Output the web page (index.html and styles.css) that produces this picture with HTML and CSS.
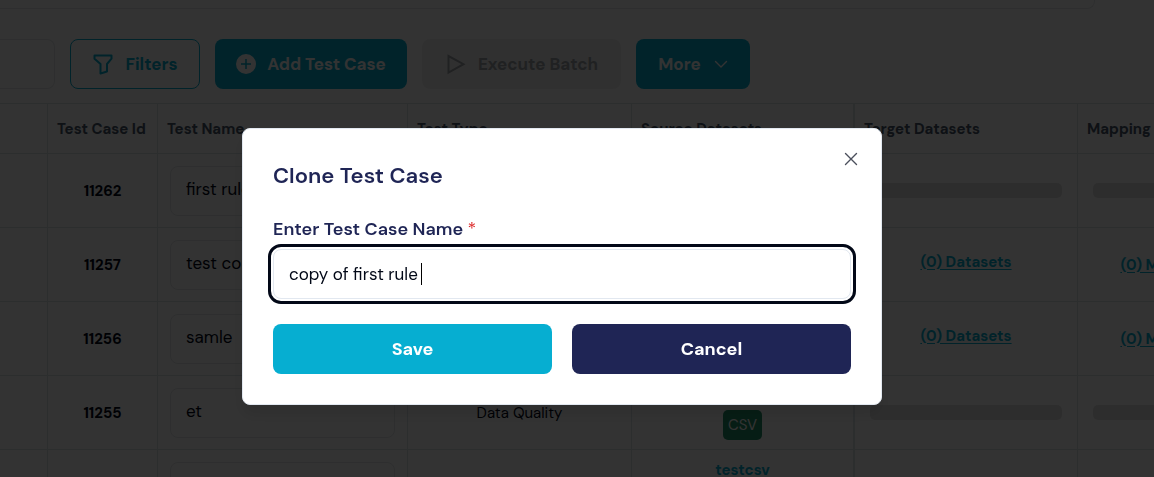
FILE: index.html
```
<!DOCTYPE html>
<html lang="en">
<head>
<meta charset="utf-8">
<meta name="viewport" content="width=device-width, initial-scale=1">
<title>Test Cases</title>
<link rel="stylesheet" href="styles.css">
</head>
<body>
<main class="page">
  <div class="panel"></div>
  <div class="toolbar">
    <input class="search" type="search" aria-label="Search test cases">
    <button class="btn btn-outline" type="button">
      <svg class="icon" viewBox="0 0 22 22" fill="none" stroke="currentColor" stroke-width="2" stroke-linejoin="round"><path d="M2.500 2.500h17v3.200l-4.500 5.300v7.500L8.500 20.500V11L2.500 5.700z"/></svg>
      Filters
    </button>
    <button class="btn btn-primary btn-add" type="button">
      <svg class="icon-plus" viewBox="0 0 20 20"><circle cx="10" cy="10" r="10" fill="#fff"/><path d="M10 5v10M5 10h10" stroke="#06aed1" stroke-width="1.500"/></svg>
      Add Test Case
    </button>
    <button class="btn btn-disabled" type="button" disabled>
      <svg class="icon" viewBox="0 0 22 22" fill="none" stroke="currentColor" stroke-width="2"><path d="M3.500 3v16.500L18.500 11.200z"/></svg>
      Execute Batch
    </button>
    <button class="btn btn-primary btn-more" type="button">
      More
      <svg class="icon-chevron" viewBox="0 0 14 14" fill="none" stroke="currentColor" stroke-width="1.400" stroke-linecap="round" stroke-linejoin="round"><path d="M1.500 4.500 7 10l5.500-5.500"/></svg>
    </button>
  </div>

  <table class="grid">
    <colgroup>
      <col class="col-select"><col class="col-id"><col class="col-name"><col class="col-data"><col class="col-source"><col class="col-target"><col class="col-mapping">
    </colgroup>
    <thead>
      <tr><th></th><th>Test Case Id</th><th>Test Name</th><th>Test Type</th><th>Source Datasets</th><th>Target Datasets</th><th>Mapping</th></tr>
    </thead>
    <tbody>
      <tr>
        <td></td><td class="id">11262</td>
        <td><input class="name" aria-label="Test name 11262" value="first rule"></td>
        <td></td><td></td>
        <td><div class="skeleton"></div></td><td><div class="skeleton"></div></td>
      </tr>
      <tr>
        <td></td><td class="id">11257</td>
        <td><input class="name" aria-label="Test name 11257" value="test copy"></td>
        <td></td><td></td>
        <td class="target"><a href="#">(0) Datasets</a></td><td><a href="#">(0) Mappings</a></td>
      </tr>
      <tr>
        <td></td><td class="id">11256</td>
        <td><input class="name" aria-label="Test name 11256" value="samle"></td>
        <td></td><td></td>
        <td class="target"><a href="#">(0) Datasets</a></td><td><a href="#">(0) Mappings</a></td>
      </tr>
      <tr>
        <td></td><td class="id">11255</td>
        <td><input class="name" aria-label="Test name 11255" value="et"></td>
        <td>Data Quality</td>
        <td><div class="source"><a href="#">testcsv</a><span class="badge">CSV</span></div></td>
        <td><div class="skeleton"></div></td><td><div class="skeleton"></div></td>
      </tr>
      <tr>
        <td></td><td></td>
        <td><input class="name" aria-label="Test name"></td>
        <td></td>
        <td><div class="source"><a href="#">testcsv</a><span class="badge">CSV</span></div></td>
        <td></td><td></td>
      </tr>
    </tbody>
  </table>
</main>

<div class="overlay">
  <form class="modal" role="dialog" aria-modal="true" aria-labelledby="dialog-title">
    <button class="close" type="button" aria-label="Close">
      <svg viewBox="0 0 14 14" fill="none" stroke="currentColor" stroke-width="1.400" stroke-linecap="round"><path d="M1.500 1.500l11 11M12.500 1.500l-11 11"/></svg>
    </button>
    <h2 id="dialog-title">Clone Test Case</h2>
    <label for="case-name">Enter Test Case Name <span class="required">*</span></label>
    <div class="field">
      <input id="case-name" type="text" value="copy of first rule" required>
      <span class="caret"></span>
    </div>
    <div class="actions">
      <button class="btn btn-save" type="submit">Save</button>
      <button class="btn btn-cancel" type="button">Cancel</button>
    </div>
  </form>
</div>
</body>
</html>
```
FILE: styles.css
```
* {
  box-sizing: border-box;
}

body {
  margin: 0;
  height: 100vh;
  overflow: hidden;
  background: #fff;
  color: #020817;
  font-family: "DM Sans", Inter, sans-serif;
  font-size: 15px;
}

button,
input {
  font: inherit;
  color: inherit;
}

.page {
  height: 100vh;
  overflow: hidden;
}

.panel {
  height: 9px;
  margin-right: 59px;
  border: solid #e5e7eb;
  border-width: 0 1px 1px 0;
  border-radius: 0 0 8px 0;
}

.toolbar {
  display: flex;
  gap: 15px;
  padding: 30px 0 14px;
}

.search {
  width: 55px;
  height: 50px;
  border: 1px solid #e5e7eb;
  border-left: 0;
  border-radius: 0 8px 8px 0;
  background: #fff;
}

.btn {
  display: flex;
  align-items: center;
  justify-content: center;
  height: 50px;
  padding: 0 20px;
  border: 0;
  border-radius: 8px;
  font-size: 17px;
  font-weight: 700;
  white-space: nowrap;
}

.btn-outline {
  gap: 11px;
  width: 130px;
  border: 1px solid #06aed1;
  background: #fff;
  color: #06aed1;
}

.btn-primary {
  background: #06aed1;
  color: #fff;
}

.btn-add {
  gap: 11px;
  width: 192px;
}

.btn-disabled {
  gap: 11px;
  width: 199px;
  background: #f1f1f1;
  color: #a0a4a8;
}

.btn-more {
  gap: 13px;
  width: 114px;
}

.icon {
  width: 22px;
  height: 22px;
  flex: none;
}

.icon-plus {
  width: 20px;
  height: 20px;
  flex: none;
}

.icon-chevron {
  width: 14px;
  height: 14px;
  flex: none;
}

.grid {
  width: 1260px;
  table-layout: fixed;
  border-collapse: separate;
  border-spacing: 0;
}

.col-select {
  width: 47px;
}

.col-id {
  width: 110px;
}

.col-name {
  width: 250px;
}

.col-data {
  width: 224px;
}

.col-source {
  width: 222px;
}

.col-target {
  width: 224px;
}

.grid th,
.grid td {
  border: solid #dce5e7;
  border-width: 0 0 1px 1px;
}

.grid th:first-child,
.grid td:first-child {
  border-left: 0;
}

.grid th:nth-child(6),
.grid td:nth-child(6) {
  border-left-width: 2px;
}

.grid th {
  height: 51px;
  padding: 0 9px;
  border-top-width: 1px;
  color: #475569;
  font-weight: 700;
  text-align: left;
  white-space: nowrap;
}

.grid td {
  height: 74px;
  padding: 0 12px;
  text-align: center;
}

.grid .id {
  font-weight: 700;
}

.name {
  display: block;
  width: 100%;
  height: 50px;
  padding: 0 15px 4px;
  border: 1px solid #e5e7eb;
  border-radius: 8px;
  background: #fff;
  font-size: 17px;
}

.grid a {
  color: #06aed1;
  font-weight: 700;
  text-underline-offset: 2px;
}

.grid .target {
  padding-bottom: 6px;
}

.skeleton {
  height: 15px;
  margin: 0 3px;
  border-radius: 5px;
  background: #e2e2e2;
}

.source {
  display: flex;
  flex-direction: column;
  align-items: center;
  gap: 4px;
  line-height: 20px;
}

.badge {
  padding: 5px;
  border-radius: 5px;
  background: #219068;
  color: #fff;
}

.overlay {
  position: fixed;
  inset: 0;
  display: flex;
  align-items: center;
  justify-content: center;
  padding: 56px 30px 0 0;
  background: rgba(0, 0, 0, 0.8);
}

.modal {
  position: relative;
  display: flex;
  flex-direction: column;
  width: 100%;
  max-width: 640px;
  padding: 30px;
  border: 1px solid #e2e8f0;
  border-radius: 8px;
  background: #fff;
  color: #1f2555;
  box-shadow: 0 10px 15px rgba(0, 0, 0, 0.1);
}

.modal h2 {
  margin: 0 0 24px;
  font-size: 22px;
  font-weight: 600;
  line-height: 34px;
}

.modal label {
  margin-bottom: 8px;
  font-size: 18px;
  font-weight: 600;
  line-height: 24px;
}

.required {
  color: #dc2626;
  font-weight: 400;
}

.close {
  position: absolute;
  top: 23px;
  right: 23px;
  display: flex;
  padding: 0;
  border: 0;
  background: none;
  color: #4b4f5c;
}

.close svg {
  width: 14px;
  height: 14px;
}

.field {
  position: relative;
  margin-bottom: 25px;
}

.field input {
  display: block;
  width: 100%;
  height: 50px;
  padding: 0 15px;
  border: 1px solid #e2e8f0;
  border-radius: 8px;
  outline: 3px solid #020817;
  outline-offset: 2px;
  color: #020817;
  font-size: 17px;
}

.caret {
  position: absolute;
  top: 14px;
  left: 148px;
  width: 1px;
  height: 22px;
  background: #000;
}

.actions {
  display: grid;
  grid-template-columns: 1fr 1fr;
  gap: 20px;
}

.actions .btn {
  font-size: 18px;
}

.btn-save {
  background: #06aed1;
  color: #fff;
}

.btn-cancel {
  background: #1f2555;
  color: #fff;
}
```
